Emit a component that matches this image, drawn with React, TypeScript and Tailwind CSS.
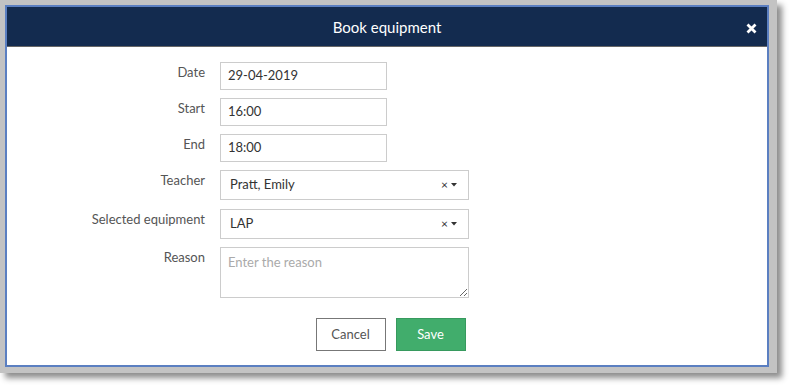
function Row({ label, children, top = "pt-0" }: { label: string; children: React.ReactNode; top?: string }) {
  return (
    <div className="flex items-start">
      <div className={`w-[198px] text-right text-[13px] leading-5 text-[#555] ${top}`}>{label}</div>
      <div className="ml-[15px]">{children}</div>
    </div>
  );
}

function TextInput({ value }: { value: string }) {
  return (
    <div className="flex h-[28px] w-[167px] items-center border border-[#ccc] bg-white px-[7px] text-[13px] text-[#333]">
      {value}
    </div>
  );
}

function SelectBox({ value }: { value: string }) {
  return (
    <div className="flex h-[30px] w-[249px] items-center justify-between border border-[#ccc] bg-white pl-[9px] pr-[11px] text-[13px] text-[#333]">
      <span>{value}</span>
      <span className="flex items-center gap-[3px] text-[#333]">
        <span className="text-[12px] leading-none">×</span>
        <svg width="6" height="4" viewBox="0 0 6 4">
          <path d="M0 0h6L3 3.5z" fill="#333" />
        </svg>
      </span>
    </div>
  );
}

export default function App() {
  return (
    <div className="h-[389px] w-[792px] bg-white font-['Lato',sans-serif]">
      <div className="w-[777px] bg-[#c3c3c3] pb-[6px] pl-[5px] pr-[8px] pt-[5px] shadow-[5px_5px_6px_rgba(0,0,0,0.45)]">
        <div className="h-[362px] border-2 border-[#5b7fc1] bg-white">
          <div className="relative flex h-[40px] items-center justify-center border-b border-[#666] bg-[#132b4f] pt-[2px]">
            <span className="text-[15px] text-white">Book equipment</span>
            <svg className="absolute right-[10px] top-[16px]" width="11" height="11" viewBox="0 0 11 11">
              <path d="M1.5 1.5l8 8M9.5 1.5l-8 8" stroke="#fff" strokeWidth="2.8" />
            </svg>
          </div>
          <div className="flex flex-col gap-[8px] pt-[15px]">
            <Row label="Date">
              <TextInput value="29-04-2019" />
            </Row>
            <Row label="Start">
              <TextInput value="16:00" />
            </Row>
            <Row label="End">
              <TextInput value="18:00" />
            </Row>
            <Row label="Teacher">
              <SelectBox value="Pratt, Emily" />
            </Row>
            <div className="pt-[1px]">
              <Row label="Selected equipment">
                <SelectBox value="LAP" />
              </Row>
            </div>
            <Row label="Reason">
              <textarea
                className="block h-[51px] w-[249px] border border-[#ccc] px-[7px] py-[5px] text-[13px] text-[#333] outline-none placeholder:text-[#aaa]"
                placeholder="Enter the reason"
              />
            </Row>
          </div>
          <div className="mt-[20px] flex justify-center gap-[10px] pl-[7px]">
            <button className="h-[33px] w-[70px] border border-[#777] bg-white text-[13px] text-[#555]">Cancel</button>
            <button className="h-[33px] w-[70px] border border-[#379a5e] bg-[#41ad6c] text-[13px] text-white">Save</button>
          </div>
        </div>
      </div>
    </div>
  );
}
